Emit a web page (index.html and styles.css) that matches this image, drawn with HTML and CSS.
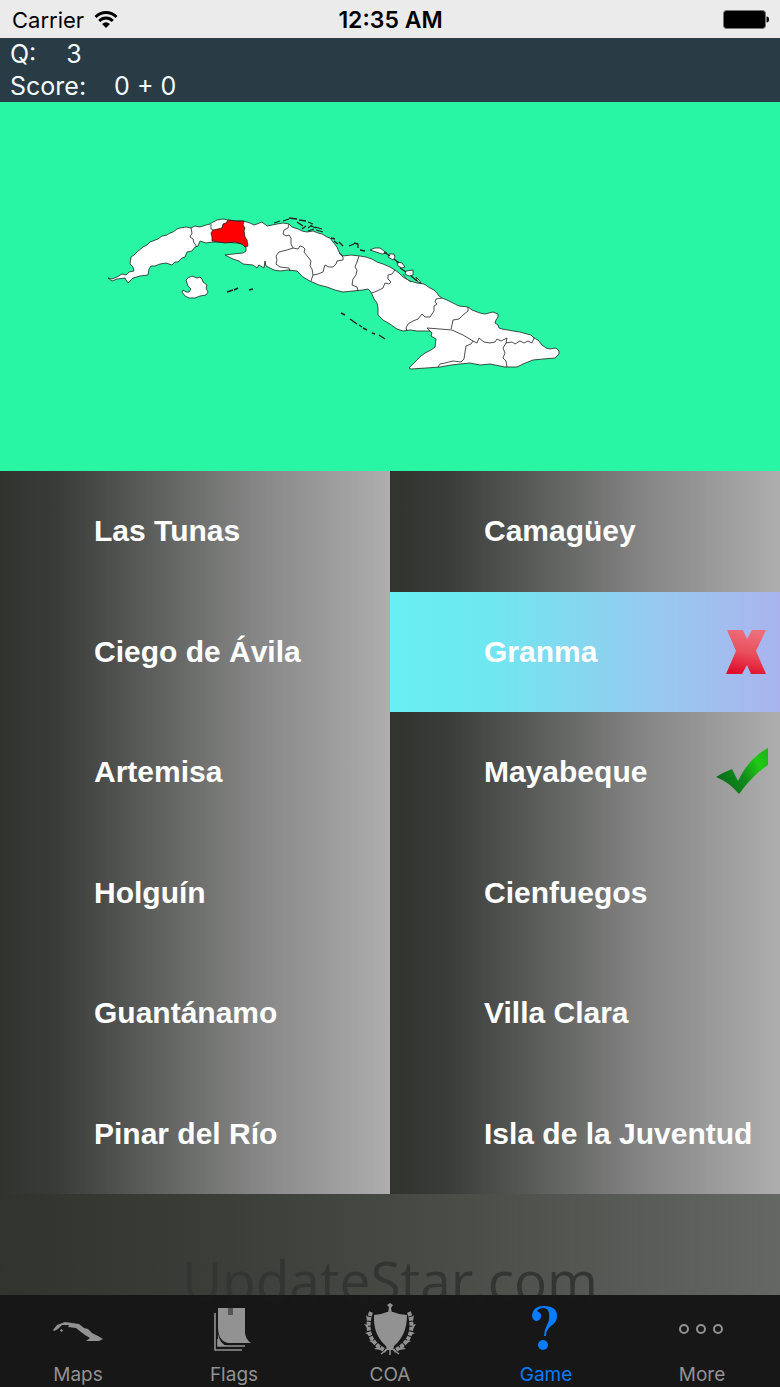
FILE: index.html
```html
<!DOCTYPE html>
<html lang="en">
<head>
  <meta charset="UTF-8">
  <meta name="viewport" content="width=device-width, initial-scale=1.0">
  <title>Cuba Provinces - Game</title>
  <link rel="stylesheet" href="styles.css">
</head>
<body>
  <div class="status-bar">
    <div class="carrier">
      <span>Carrier</span>
      <svg class="wifi" width="24" height="18" viewBox="0 0 24 18">
        <path d="M1.500 6C7.500 0 16.500 0 22.500 6M5.200 10C9 6 15 6 18.800 10" fill="none" stroke="#000" stroke-width="2.800"/>
        <path d="M8 13Q12 9.500 16 13L12 17z"/>
      </svg>
    </div>
    <time class="clock">12:35 AM</time>
    <svg class="battery" width="46" height="20" viewBox="0 0 46 20">
      <rect x="0.5" y="0.500" width="42" height="18" rx="3" fill="#000" stroke="#777"/>
      <path d="M43.500 6.500q2.500 0 2.500 3t-2.500 3z"/>
    </svg>
  </div>

  <header class="score">
    <p><span>Q:</span><span class="question-no">3</span></p>
    <p><span>Score:</span><span class="points">0 + 0</span></p>
  </header>

  <section class="map">
    <svg viewBox="0 102 780 369" role="img" aria-label="Map of Cuba">
      <g fill="#fff" stroke="#222" stroke-width="0.8" stroke-linejoin="round">
        <!-- main island -->
        <path d="M108 278L112 279 117 277 122 274 126 275 129 272 134 271 133 267 130 264 131 257 134 255 137 252 143 247 147 245 150 242 158 239 162 236 167 235 170 233 173 232 177 229 180 228 186 227 191 228 195 226 200 227 206 225 210 224 213 222 217 220 223 219 228 220 236 221 243 221 250 223 254 225 257 224 262 222 267 226 272 225 277 224 283 223 289 224 292 227 298 229 302 231 307 232 313 231 318 233 322 234 327 237 330 238 333 242 337 247 339 252 343 256 351 255 360 256 366 257 372 259 377 262 383 264 390 267 395 270 399 273 403 277 410 281 417 283 424 284 430 288 434 290 437 293 439 296 442 298 447 300 453 303 459 306 468 307 472 310 480 313 485 314 493 312 498 314 498 317 496 320 495 323 498 325 499 328 502 329 508 330 513 331 520 332 527 334 531 335 534 338 538 340 542 345 546 348 550 349 556 348 559 351 559 354 555 358 543 359 533 360 528 362 523 364 517 367 505 367 500 366 490 364 480 365 470 363 460 364 451 365 440 367 426 368 411 369 409 368 411 366 417 360 421 356 425 353 431 350 435 347 436 339 431 336 432 333 430 331 417 331 410 330 403 331 397 329 390 324 383 320 378 315 378 308 377 303 374 299 371 292 368 289 363 290 353 291 343 292 335 290 327 287 319 285 312 282 308 280 303 277 297 271 288 270 280 271 274 270 270 268 266 266 265 261 264 268 259 265 257 268 253 265 243 264 239 261 233 259 229 257 225 255 233 254 243 253 246 251 246 247 242 244 237 243 223 242 213 242 206 243 200 241 198 246 195 247 192 251 187 252 185 257 182 258 178 262 175 262 172 265 166 263 160 264 155 266 151 266 149 269 148 275 140 276 133 278 128 283 126 280 125 278 117 279 112 281z"/>
        <!-- Isla de la Juventud -->
        <path d="M186 280L188 278 192 276 197 278 200 277 202 279 203 282 207 285 206 288 208 292 206 295 200 296 195 298 189 298 185 296 182 292 183 290 186 292 189 292 191 289 188 286z"/>
        <!-- northern cays -->
        <path d="M370 250L375 248 380 248 384 251 387 253 382 254 376 252zM389 254L394 254 395 257 393 260 388 257zM397 262L402 263 405 267 402 268 398 266zM406 271L413 270 413 275 409 276 405 274zM416 277L419 280 421 283 418 282zM403 274L407 279 411 282"/>
        <path d="M274 223L280 221M283 221L289 219M289 218L297 219M299 220L306 221M308 222L313 224M315 227L322 229M316 230L323 232M302 229L306 226M308 228L312 225M308 231L314 229M311 226L316 228M331 238L335 239M334 241L338 244M339 242L343 246M349 246L354 244M354 243L358 244 358 248M360 250L365 251M297 222L303 226M384 252L390 256M394 259L399 263M400 268L406 272M411 276L417 281" fill="none" stroke-width="1.300"/>
        <!-- southern cays -->
        <path d="M227 292L233 290M234 290L238 288M249 290L253 289M341 313L345 315M350 319L357 324M359 325L362 327M363 328L367 330M372 333L375 334M379 335L385 339" fill="none" stroke-width="1.400"/>
        <!-- highlighted province -->
        <path d="M212 241L212 237 211 233 213 230 218 229 222 228 223 224 226 223 228 220 236 221 244 221 243 225 245 228 244 231 245 237 247 240 248 246 245 247 242 244 235 242 225 243z" fill="red"/>
        <!-- province borders -->
        <path fill="none" d="M191 228L192 233 190 237 193 239 194 243 197 247M211 224L211 229 213 230M289 224L288 228 284 230 283 234 286 236 289 235 291 238 291 244 293 248 287 250 279 252 276 256 277 260 276 264 280 267 289 268 290 271M293 248L298 249 300 246 303 247 305 249 304 252 308 257 311 261 310 266 312 269 313 275 311 281M313 275L318 274 323 272 324 268 325 265 329 267 333 267 336 264 337 261 343 260 343 257 339 253M359 256L357 262 355 267 357 270 356 275 353 279 352 285 357 287 358 291M395 270L392 274 388 275 388 279 391 282 389 284 385 283 383 288 377 291 372 293M442 298L436 299 435 302 437 304 434 306 434 311 430 317 425 317 422 314 418 319 413 321 408 324 406 328 407 331M468 307L468 311 463 315 459 319 453 320 452 325 451 329M430 331L427 328 440 329 452 330 463 335 473 341 471 344 466 346 465 352 464 359 461 362 453 361 445 363 440 364 438 367M473 341L477 343 479 338 484 342 490 343 495 342 497 339 501 341 507 338 506 343 503 348 505 353 503 358 506 361 507 367M506 343L512 342 515 344 520 341 524 343 528 341 532 343 534 338"/>
      </g>
    </svg>
  </section>

  <main class="answers">
    <button type="button">Las Tunas</button>
    <button type="button">Camagüey</button>
    <button type="button">Ciego de Ávila</button>
    <button type="button" class="selected">
      Granma
      <svg class="mark" width="56" height="48" viewBox="0 0 56 48">
        <defs>
          <linearGradient id="wrong" x1="0.600" y1="0" x2="0.400" y2="1">
            <stop offset="0" stop-color="#ee6f7b"/>
            <stop offset="0.500" stop-color="#e9505e"/>
            <stop offset="1" stop-color="#e00d2b"/>
          </linearGradient>
        </defs>
        <path d="M12 2H28L32 11 37 2H51L41 23 51 46H36L32 37 27 46H11L21 23z" fill="url(#wrong)"/>
      </svg>
    </button>
    <button type="button">Artemisa</button>
    <button type="button">
      Mayabeque
      <svg class="mark" width="56" height="48" viewBox="0 0 56 48">
        <defs>
          <linearGradient id="right" x1="0" y1="0.700" x2="1" y2="0.200">
            <stop offset="0" stop-color="#08691a"/>
            <stop offset="0.450" stop-color="#128c1b"/>
            <stop offset="0.800" stop-color="#1fcb13"/>
            <stop offset="1" stop-color="#20b51c"/>
          </linearGradient>
        </defs>
        <path d="M1 29Q9 24 17 21L23 33Q34 10 53 0V17Q38 27 24 46Q14 34 1 29z" fill="url(#right)"/>
      </svg>
    </button>
    <button type="button">Holguín</button>
    <button type="button">Cienfuegos</button>
    <button type="button">Guantánamo</button>
    <button type="button">Villa Clara</button>
    <button type="button">Pinar del Río</button>
    <button type="button">Isla de la Juventud</button>
  </main>

  <div class="filler">
    <span class="watermark">UpdateStar.com</span>
  </div>

  <nav class="tab-bar">
    <a href="#">
      <svg width="56" height="56" viewBox="0 0 56 56" fill="currentColor">
        <path d="M3 27L7 22 15 19 22 20 29 21 34 25 38 26 42 30 48 33 53 36 49 38H36L40 35 35 32 31 29 26 25 18 24 19 22 12 22 8 26 4 28z"/>
        <path d="M11 26l2 1-1 2-2-1z"/>
      </svg>
      <span>Maps</span>
    </a>
    <a href="#">
      <svg width="56" height="56" viewBox="0 0 56 56" fill="currentColor">
        <path d="M9 10V47H36M12 36V43H39" fill="none" stroke="currentColor" stroke-width="1.600"/>
        <path d="M12 31Q14 41 21 43H12z"/>
        <path d="M12 5H39V29Q39 36 45 40H22Q12 38 12 24z"/>
        <path d="M22 5h5v7h-5z" fill="#555"/>
      </svg>
      <span>Flags</span>
    </a>
    <a href="#">
      <svg width="56" height="56" viewBox="0 0 56 56" fill="currentColor">
        <path d="M12 12Q18 12 25 9H31Q38 12 45 12Q45 32 32 43L31 47H25L24 43Q11 32 12 12z"/>
        <path d="M26 10L27 4 25 2 28 0 31 2 29 5 30 10z"/>
        <path d="M19 51L27 45H29L37 51M28 45V52" fill="none" stroke="currentColor" stroke-width="1.500"/>
        <g stroke="currentColor" stroke-width="4" fill="none" stroke-dasharray="4 1">
          <path d="M9 9Q0 36 24 48"/>
          <path d="M47 9Q56 36 32 48"/>
        </g>
        <path d="M7 15l-3-3 1 6zM6 22l-4-1 4 5zM7 29l-4 1 6 3zM11 37l-4 1 6 3zM17 43l-5 3 7 1zM49 15l3-3-1 6zM50 22l4-1-3 5zM49 29l4 1-6 3zM45 37l4 1-6 3zM39 43l5 3-7 1z"/>
      </svg>
      <span>COA</span>
    </a>
    <a href="#" class="active">
      <svg width="56" height="56" viewBox="0 0 56 56" fill="currentColor">
        <path d="M26 33Q26 27 29 22Q32 17 31 10Q30 5 25 5Q21 5 19 8Q24 10 23 14Q22 18 18 18Q14 17 14 12Q15 3 26 3Q39 3 39 13Q39 19 33 23Q28 27 28 33z"/>
        <circle cx="25" cy="42" r="5"/>
      </svg>
      <span>Game</span>
    </a>
    <a href="#">
      <svg width="56" height="56" viewBox="0 0 56 56" fill="none" stroke="currentColor" stroke-width="2">
        <circle cx="10" cy="26" r="4"/>
        <circle cx="27" cy="26" r="4"/>
        <circle cx="44" cy="26" r="4"/>
      </svg>
      <span>More</span>
    </a>
  </nav>
</body>
</html>
```
FILE: styles.css
```css
* {
  box-sizing: border-box;
  margin: 0;
  padding: 0;
}
body {
  min-height: 100vh;
  display: flex;
  flex-direction: column;
  font-family: Inter, Roboto, sans-serif;
  background: #171717;
}
svg {
  display: block;
}
.status-bar {
  display: grid;
  grid-template-columns: 1fr auto 1fr;
  align-items: center;
  height: 38px;
  padding: 2px 11px 0 12px;
  background: #ebebeb;
  color: #000;
  font-size: 22px;
  line-height: 36px;
}
.carrier {
  display: flex;
  align-items: center;
  gap: 10px;
}
.clock {
  font-size: 23px;
  font-weight: 600;
}
.battery {
  justify-self: end;
}
.score {
  padding-left: 10px;
  background: #293c46;
  color: #f4fbff;
  font-size: 25px;
  line-height: 32px;
}
.question-no {
  margin-left: 30px;
}
.points {
  margin-left: 28px;
}
.map {
  background: #28f6a4;
}
.map svg {
  width: 100%;
}
.answers {
  display: grid;
  grid-template-columns: 1fr 1fr;
  grid-auto-rows: 1fr;
  min-height: 723px;
}
.answers button {
  position: relative;
  padding-left: 94px;
  border: none;
  background: linear-gradient(to right, #31332f, #393b38 14%, #4e504d 29%, #848584 65%, #aeaeae);
  color: #fff;
  font-family: "Liberation Sans", Arial, sans-serif;
  font-size: 30px;
  font-weight: 700;
  text-align: left;
  cursor: pointer;
}
.answers .selected {
  background: linear-gradient(to right, #67eff3, #6fe7f0 25%, #99c8ef 70%, #a9b4ee);
}
.mark {
  position: absolute;
  right: 9px;
  top: 50%;
  transform: translateY(-50%);
}
.filler {
  position: relative;
  flex: 1;
  min-height: 100px;
  background: linear-gradient(to right, #31332f, #3a3c38 25%, #4b4d49 60%, #656764);
}
.watermark {
  position: absolute;
  top: 48px;
  width: 100%;
  color: #333532;
  font-family: "Open Sans", sans-serif;
  font-size: 55px;
  text-align: center;
}
.tab-bar {
  position: relative;
  display: grid;
  grid-template-columns: repeat(5, 1fr);
  padding-top: 8px;
  background: rgba(23, 23, 23, 0.95);
}
.tab-bar a {
  display: flex;
  flex-direction: column;
  align-items: center;
  color: #929292;
  font-size: 19px;
  line-height: 28px;
  text-decoration: none;
}
.tab-bar svg {
  margin-bottom: 2px;
}
.tab-bar a span {
  height: 26px;
}
.tab-bar a.active {
  color: #087cff;
}
```
